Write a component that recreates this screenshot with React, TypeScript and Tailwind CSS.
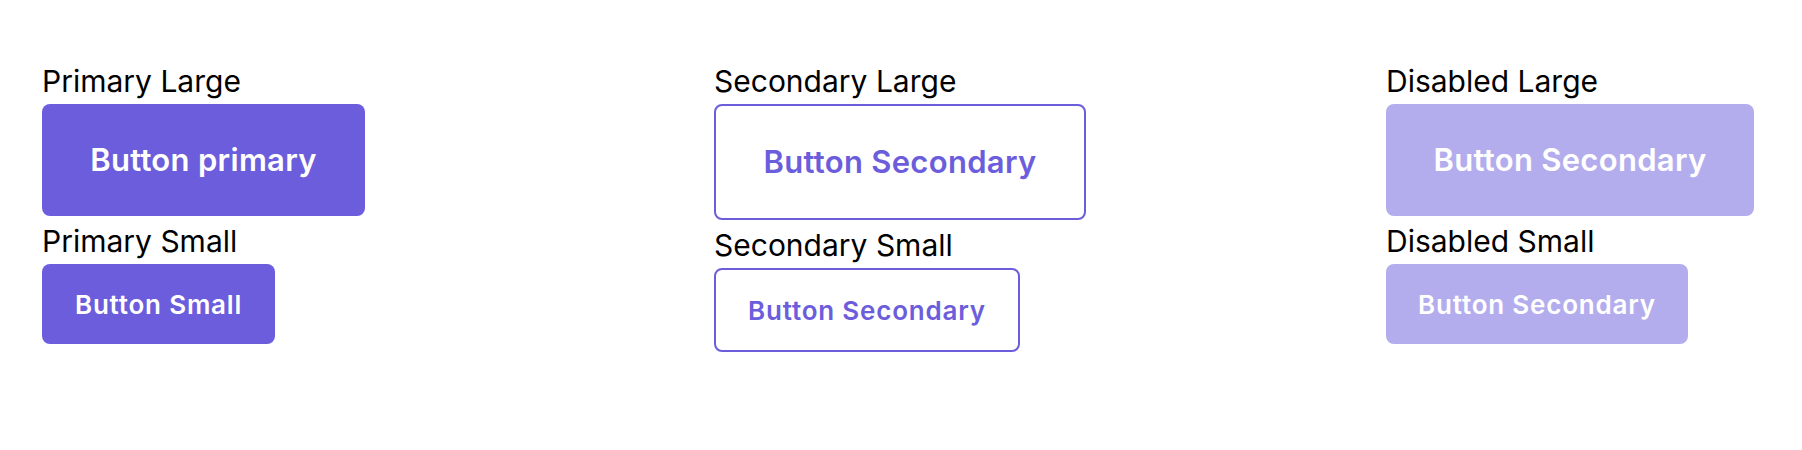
const font = { fontFamily: "Inter, 'Noto Sans', sans-serif" };

type Variant = "primary" | "secondary" | "disabled";

function Btn({ variant, size, w, children }: { variant: Variant; size: "lg" | "sm"; w: string; children: string }) {
  const base =
    size === "lg"
      ? "h-[112px] text-[31px] tracking-[0.3px]"
      : "h-[80px] text-[26px] tracking-[0.8px]";
  const look =
    variant === "primary"
      ? "bg-[#6b5ddc] text-white"
      : variant === "secondary"
      ? "bg-white text-[#6b5ddc] border-2 border-[#6b5ddc] box-content"
      : "bg-[#6b5ddc] text-white opacity-50 cursor-not-allowed";
  return (
    <button
      disabled={variant === "disabled"}
      className={`${base} ${look} ${w} self-start rounded-lg font-semibold flex items-center justify-center whitespace-nowrap`}
    >
      {children}
    </button>
  );
}

const columns: {
  title: string;
  variant: Variant;
  large: string;
  small: string;
  lw: string;
  sw: string;
}[] = [
  { title: "Primary", variant: "primary", large: "Button primary", small: "Button Small", lw: "w-[323px]", sw: "w-[233px]" },
  { title: "Secondary", variant: "secondary", large: "Button Secondary", small: "Button Secondary", lw: "w-[368px]", sw: "w-[302px]" },
  { title: "Disabled", variant: "disabled", large: "Button Secondary", small: "Button Secondary", lw: "w-[368px]", sw: "w-[302px]" },
];

export default function App() {
  return (
    <div className="w-[1802px] h-[450px] bg-white text-black" style={font}>
      <div className="grid grid-cols-3 gap-x-[298px] px-[42px] pt-[58px]">
        {columns.map((c) => (
          <div key={c.title} className="flex flex-col">
            <span className="text-[30px] leading-[46px]">{c.title} Large</span>
            <Btn variant={c.variant} size="lg" w={c.lw}>{c.large}</Btn>
            <span className="text-[30px] leading-[46px] mt-[2px]">{c.title} Small</span>
            <Btn variant={c.variant} size="sm" w={c.sw}>{c.small}</Btn>
          </div>
        ))}
      </div>
    </div>
  );
}
